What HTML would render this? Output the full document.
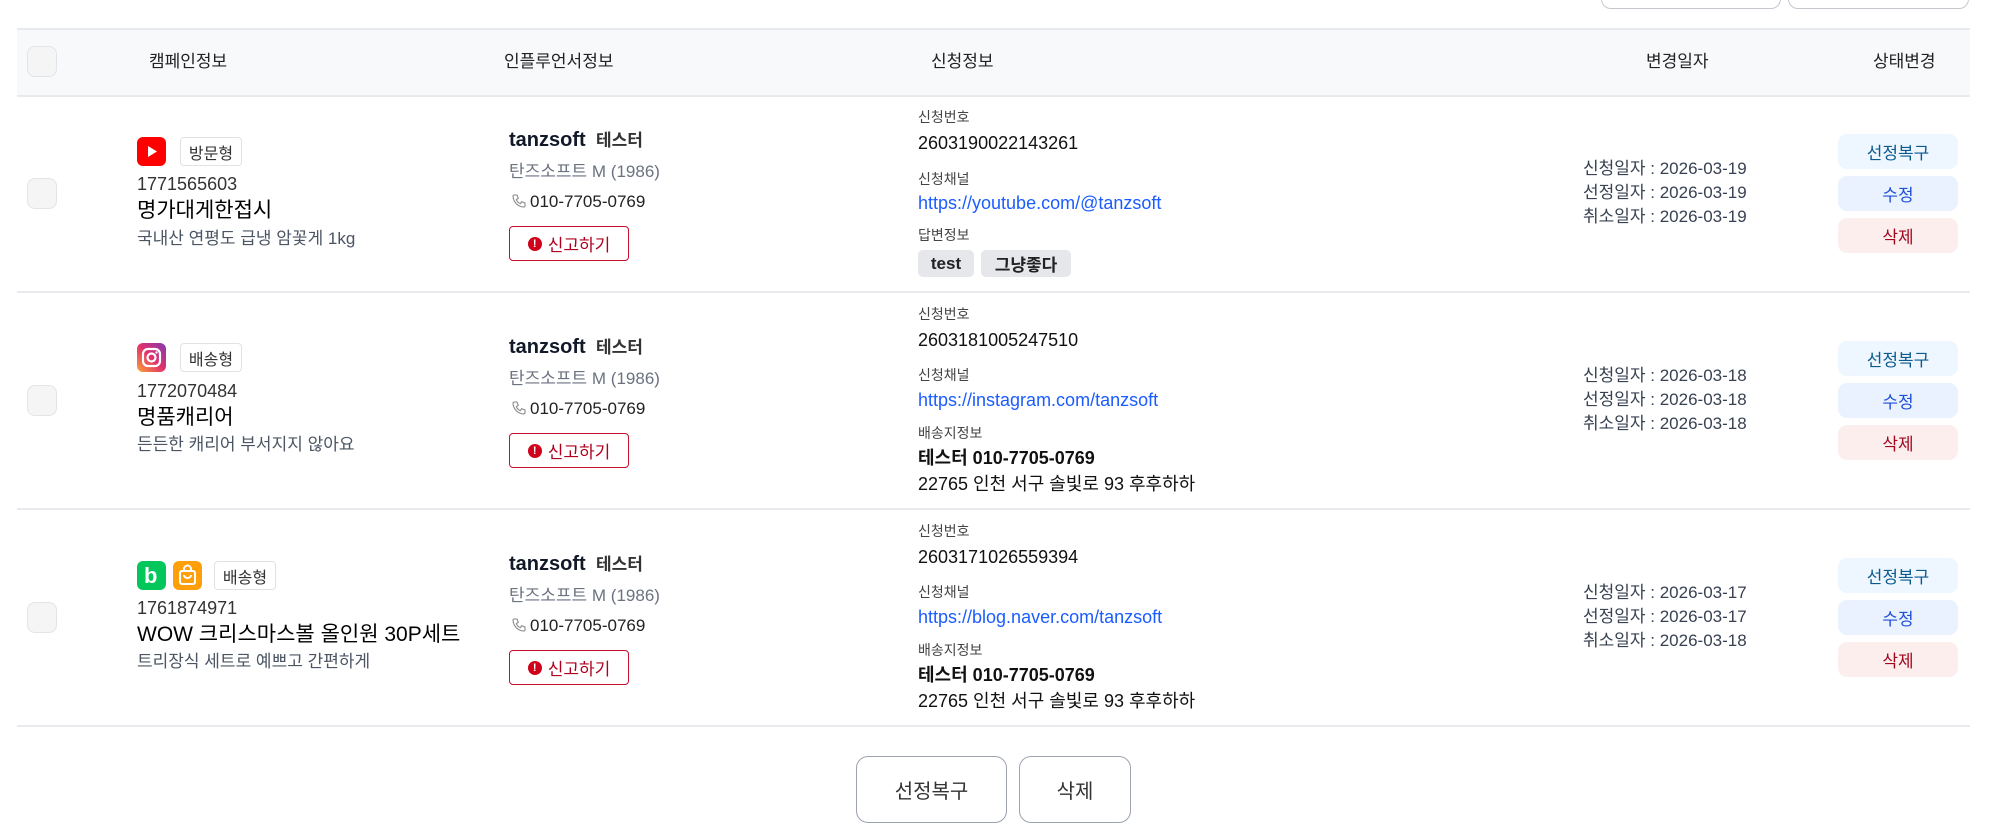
<!DOCTYPE html>
<html><head><meta charset="utf-8">
<style>
*{box-sizing:border-box;margin:0;padding:0}
body{width:1994px;height:840px;background:#fff;position:relative;overflow:hidden;font-family:"Liberation Sans","Noto Sans CJK KR",sans-serif;color:#111827}
.a{position:absolute;white-space:nowrap;line-height:1}
.hl{position:absolute;left:17px;width:1953px;height:2px;background:#e8eaee}
.cb{position:absolute;left:27px;width:30px;height:31px;border:1px solid #e2e4e8;border-radius:8px;background:#f5f5f6}
.ic{position:absolute;width:29px;height:29px;border-radius:6px}
.tag{position:absolute;height:29px;border:1px solid #e0e2e6;border-radius:4px;font-size:16px;color:#333;display:flex;align-items:center;justify-content:center}
.rep{position:absolute;left:509px;width:120px;height:35px;border:1.5px solid #c8102e;border-radius:4px;color:#b0001e;font-size:17px;display:flex;align-items:center;justify-content:center;gap:6px}
.rep i{width:14px;height:14px;border-radius:50%;background:#d0021b;color:#fff;font-style:normal;font-size:11px;font-weight:bold;display:flex;align-items:center;justify-content:center}
.sb{position:absolute;left:1838px;width:120px;height:35px;border-radius:9px;font-size:17px;display:flex;align-items:center;justify-content:center}
.s1{background:#eef6ff;color:#0b5a8e}.s2{background:#eaf2ff;color:#1d4ed8}.s3{background:#fdeeee;color:#a3071e}
.lbl{font-size:14px;color:#444}
.num{font-size:18px;color:#111}
.lnk{font-size:18px;color:#1a5cff}
.dt{font-size:17px;color:#374151;left:1583px}
.gray{color:#6b7280}
.chip{position:absolute;height:27px;background:#e5e7eb;border-radius:5px;font-size:17px;font-weight:bold;display:flex;align-items:center;justify-content:center;color:#222}
.bb{position:absolute;top:756px;height:67px;border:1.5px solid #9ca3af;border-radius:12px;font-size:20px;color:#333;display:flex;align-items:center;justify-content:center;background:#fff}
.ph{display:inline-block;vertical-align:-2px;margin-right:3px}
.nm{font-size:20px;font-weight:bold}
</style></head><body>
<div class="a" style="left:1601px;top:-20px;width:180px;height:29px;border:1.5px solid #c4c8ce;border-radius:10px"></div>
<div class="a" style="left:1788px;top:-20px;width:181px;height:29px;border:1.5px solid #c4c8ce;border-radius:10px"></div>

<div style="position:absolute;left:17px;top:28px;width:1953px;height:67px;background:#f8f9fb"></div>
<div class="hl" style="top:28px"></div>
<div class="hl" style="top:95px"></div>
<div class="cb" style="top:46px"></div>
<div class="a" style="left:149px;top:53px;font-size:17px;color:#222">캠페인정보</div>
<div class="a" style="left:504px;top:53px;font-size:17px;color:#222">인플루언서정보</div>
<div class="a" style="left:931px;top:53px;font-size:17px;color:#222">신청정보</div>
<div class="a" style="left:1646px;top:53px;font-size:17px;color:#222">변경일자</div>
<div class="a" style="left:1873px;top:53px;font-size:17px;color:#222">상태변경</div>

<!-- Row 1 -->
<div class="cb" style="top:178px"></div>
<div class="ic" style="left:137px;top:137px;background:#ff0000"><svg width="29" height="29"><path d="M11 9 L20 14.5 L11 20Z" fill="#fff"/></svg></div>
<div class="tag" style="left:180px;top:137px;width:62px">방문형</div>
<div class="a" style="left:137px;top:175px;font-size:18px;color:#333">1771565603</div>
<div class="a" style="left:137px;top:200px;font-size:21px;color:#000">명가대게한접시</div>
<div class="a" style="left:137px;top:230px;font-size:17px;color:#4b5563">국내산 연평도 급냉 암꽃게 1kg</div>
<div class="a nm" style="left:509px;top:130px">tanzsoft <span style="font-size:17px;color:#333">&nbsp;테스터</span></div>
<div class="a gray" style="left:509px;top:163px;font-size:17px">탄즈소프트 M (1986)</div>
<div class="a" style="left:511px;top:193px;font-size:17px;color:#222"><svg class="ph" width="16" height="16" viewBox="0 0 24 24"><path d="M5 3h4l2 5-3 2a11 11 0 0 0 6 6l2-3 5 2v4a2 2 0 0 1-2 2A17 17 0 0 1 3 5a2 2 0 0 1 2-2z" fill="none" stroke="#888" stroke-width="1.6"/></svg>010-7705-0769</div>
<div class="rep" style="top:226px"><i>!</i>신고하기</div>
<div class="a lbl" style="left:918px;top:110px">신청번호</div>
<div class="a num" style="left:918px;top:134px">2603190022143261</div>
<div class="a lbl" style="left:918px;top:172px">신청채널</div>
<div class="a lnk" style="left:918px;top:194px">https://youtube.com/@tanzsoft</div>
<div class="a lbl" style="left:918px;top:228px">답변정보</div>
<div class="chip" style="left:918px;top:250px;width:56px">test</div>
<div class="chip" style="left:981px;top:250px;width:90px">그냥좋다</div>
<div class="a dt" style="top:160px">신청일자 : 2026-03-19</div>
<div class="a dt" style="top:184px">선정일자 : 2026-03-19</div>
<div class="a dt" style="top:208px">취소일자 : 2026-03-19</div>
<div class="sb s1" style="top:134px">선정복구</div>
<div class="sb s2" style="top:176px">수정</div>
<div class="sb s3" style="top:218px">삭제</div>
<div class="hl" style="top:291px"></div>

<!-- Row 2 -->
<div class="cb" style="top:385px"></div>
<div class="ic" style="left:137px;top:343px;background:linear-gradient(45deg,#f9a534,#e1306c 50%,#833ab4)"><svg width="29" height="29"><rect x="6" y="6" width="17" height="17" rx="5" fill="none" stroke="#fff" stroke-width="2.2"/><circle cx="14.5" cy="14.5" r="4" fill="none" stroke="#fff" stroke-width="2.2"/><circle cx="19.5" cy="9.5" r="1.2" fill="#fff"/></svg></div>
<div class="tag" style="left:180px;top:343px;width:62px">배송형</div>
<div class="a" style="left:137px;top:382px;font-size:18px;color:#333">1772070484</div>
<div class="a" style="left:137px;top:407px;font-size:21px;color:#000">명품캐리어</div>
<div class="a" style="left:137px;top:436px;font-size:17px;color:#4b5563">든든한 캐리어 부서지지 않아요</div>
<div class="a nm" style="left:509px;top:337px">tanzsoft <span style="font-size:17px;color:#333">&nbsp;테스터</span></div>
<div class="a gray" style="left:509px;top:370px;font-size:17px">탄즈소프트 M (1986)</div>
<div class="a" style="left:511px;top:400px;font-size:17px;color:#222"><svg class="ph" width="16" height="16" viewBox="0 0 24 24"><path d="M5 3h4l2 5-3 2a11 11 0 0 0 6 6l2-3 5 2v4a2 2 0 0 1-2 2A17 17 0 0 1 3 5a2 2 0 0 1 2-2z" fill="none" stroke="#888" stroke-width="1.6"/></svg>010-7705-0769</div>
<div class="rep" style="top:433px"><i>!</i>신고하기</div>
<div class="a lbl" style="left:918px;top:307px">신청번호</div>
<div class="a num" style="left:918px;top:331px">2603181005247510</div>
<div class="a lbl" style="left:918px;top:368px">신청채널</div>
<div class="a lnk" style="left:918px;top:391px">https://instagram.com/tanzsoft</div>
<div class="a lbl" style="left:918px;top:426px">배송지정보</div>
<div class="a num" style="left:918px;top:449px;font-weight:bold">테스터 010-7705-0769</div>
<div class="a num" style="left:918px;top:475px">22765 인천 서구 솔빛로 93 후후하하</div>
<div class="a dt" style="top:367px">신청일자 : 2026-03-18</div>
<div class="a dt" style="top:391px">선정일자 : 2026-03-18</div>
<div class="a dt" style="top:415px">취소일자 : 2026-03-18</div>
<div class="sb s1" style="top:341px">선정복구</div>
<div class="sb s2" style="top:383px">수정</div>
<div class="sb s3" style="top:425px">삭제</div>
<div class="hl" style="top:508px"></div>

<!-- Row 3 -->
<div class="cb" style="top:602px"></div>
<div class="ic" style="left:137px;top:561px;background:#03c75a"><div class="a" style="left:7px;top:4px;color:#fff;font-weight:bold;font-size:22px">b</div></div>
<div class="ic" style="left:173px;top:561px;background:#ff9f0a"><svg width="29" height="29"><rect x="7" y="10" width="15" height="13" rx="2" fill="none" stroke="#fff" stroke-width="2"/><path d="M11 10 V8 a3.5 3.5 0 0 1 7 0 V10 M11 14 a3.5 3 0 0 0 7 0" fill="none" stroke="#fff" stroke-width="2"/></svg></div>
<div class="tag" style="left:214px;top:561px;width:62px">배송형</div>
<div class="a" style="left:137px;top:599px;font-size:18px;color:#333">1761874971</div>
<div class="a" style="left:137px;top:624px;font-size:21px;color:#000">WOW 크리스마스볼 올인원 30P세트</div>
<div class="a" style="left:137px;top:653px;font-size:17px;color:#4b5563">트리장식 세트로 예쁘고 간편하게</div>
<div class="a nm" style="left:509px;top:554px">tanzsoft <span style="font-size:17px;color:#333">&nbsp;테스터</span></div>
<div class="a gray" style="left:509px;top:587px;font-size:17px">탄즈소프트 M (1986)</div>
<div class="a" style="left:511px;top:617px;font-size:17px;color:#222"><svg class="ph" width="16" height="16" viewBox="0 0 24 24"><path d="M5 3h4l2 5-3 2a11 11 0 0 0 6 6l2-3 5 2v4a2 2 0 0 1-2 2A17 17 0 0 1 3 5a2 2 0 0 1 2-2z" fill="none" stroke="#888" stroke-width="1.6"/></svg>010-7705-0769</div>
<div class="rep" style="top:650px"><i>!</i>신고하기</div>
<div class="a lbl" style="left:918px;top:524px">신청번호</div>
<div class="a num" style="left:918px;top:548px">2603171026559394</div>
<div class="a lbl" style="left:918px;top:585px">신청채널</div>
<div class="a lnk" style="left:918px;top:608px">https://blog.naver.com/tanzsoft</div>
<div class="a lbl" style="left:918px;top:643px">배송지정보</div>
<div class="a num" style="left:918px;top:666px;font-weight:bold">테스터 010-7705-0769</div>
<div class="a num" style="left:918px;top:692px">22765 인천 서구 솔빛로 93 후후하하</div>
<div class="a dt" style="top:584px">신청일자 : 2026-03-17</div>
<div class="a dt" style="top:608px">선정일자 : 2026-03-17</div>
<div class="a dt" style="top:632px">취소일자 : 2026-03-18</div>
<div class="sb s1" style="top:558px">선정복구</div>
<div class="sb s2" style="top:600px">수정</div>
<div class="sb s3" style="top:642px">삭제</div>
<div class="hl" style="top:725px"></div>

<div class="bb" style="left:856px;width:151px">선정복구</div>
<div class="bb" style="left:1019px;width:112px">삭제</div>
</body></html>
